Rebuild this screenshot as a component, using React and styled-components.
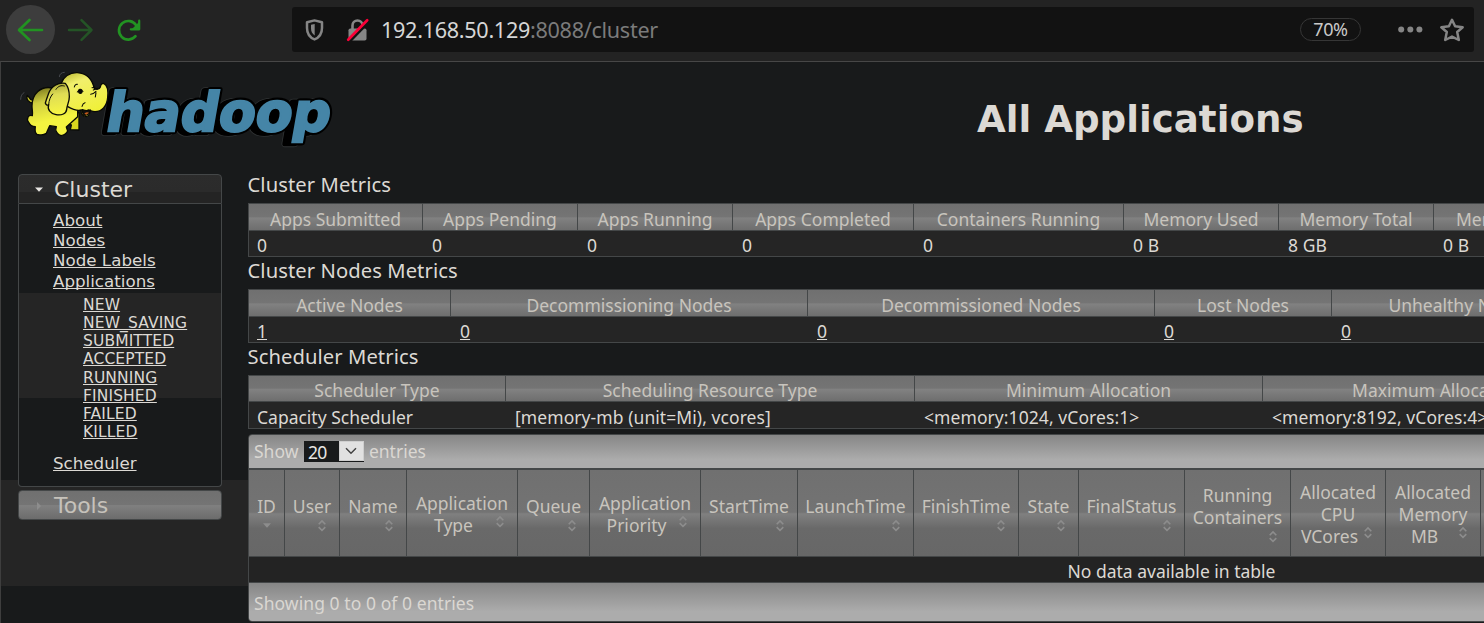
import React from 'react';
import styled, { createGlobalStyle, css } from 'styled-components';

const ui = '"Noto Sans", "Open Sans", sans-serif';
const wide = '"DejaVu Sans", sans-serif';
const line = '#444748';
const text = '#dcd9d4';

const GlobalStyle = createGlobalStyle`
  *, *::before, *::after { box-sizing: border-box; }
  body { margin: 0; background: #181a1b; color: ${text}; font-family: ${ui}; overflow: hidden; }
  svg { display: block; flex: none; overflow: visible; }
`;

const Window = styled.div`
  width: 1484px;
  height: 623px;
  overflow: hidden;
  display: flex;
  flex-direction: column;
`;

/* browser bar */
const BrowserBar = styled.header`
  flex: none;
  display: flex;
  align-items: center;
  height: 61px;
  padding: 0 10px 2px 6px;
  background: #232323;
`;
const NavButton = styled.span`
  width: 49px;
  height: 49px;
  flex: none;
  display: grid;
  place-items: center;
  border-radius: 50%;
  color: ${(p) => (p.$dim ? '#245426' : '#229322')};
  ${(p) => p.$filled && css`background: #3d3d3d;`}
`;
const AddressBar = styled.div`
  flex: 1;
  display: flex;
  align-items: center;
  height: 45px;
  margin-left: 139px;
  padding: 0 9px 0 12.5px;
  border-radius: 3px;
  background: #121212;
  color: #858585;
`;
const SecurityIcons = styled.span`
  display: flex;
  align-items: center;
  gap: 22px;
`;
const Address = styled.span`
  margin-left: 12.5px;
  flex: 1;
  font-size: 21.6px;
  line-height: 45px;
  letter-spacing: -0.3px;
  color: #7b7b7b;
  b { font-weight: 400; color: #d6d6d6; }
`;
const ZoomPill = styled.span`
  width: 61px;
  height: 23px;
  margin-right: 37px;
  border: 1px solid #363636;
  border-radius: 12px;
  font-size: 18px;
  line-height: 21px;
  letter-spacing: -0.4px;
  text-align: center;
  color: #c9c9c9;
`;

/* page */
const Page = styled.div`
  flex: 1;
  min-height: 0;
  display: flex;
  flex-direction: column;
  border-top: 1px solid #474747;
  border-left: 1px solid #3e3e3e;
  background: #181a1b;
  overflow: hidden;
`;
const Banner = styled.div`
  flex: none;
  display: flex;
  align-items: flex-start;
  height: 109px;
  padding: 2px 0 0 17px;
`;
const PageTitle = styled.h1`
  margin: 33px 0 0 639px;
  font: 700 37.2px/44px ${wide};
  white-space: nowrap;
  color: ${text};
`;
const Body = styled.div`
  flex: 1;
  display: flex;
  min-height: 0;
`;
const Sidebar = styled.nav`
  width: 247px;
  flex: none;
  padding: 3px 0 0 17px;
  font-family: ${wide};
  background: linear-gradient(#181a1b 309px, #252525 309px, #252525 415px, #181a1b 415px);
`;
const MenuTitle = styled.div`
  display: flex;
  align-items: center;
  width: 204px;
  height: 30px;
  padding: 1px 0 0 15px;
  border: 1px solid ${line};
  font-size: 22px;
  line-height: 28px;
  color: ${(p) => (p.$open ? text : '#c6c2bb')};
  border-radius: ${(p) => (p.$open ? '4px 4px 0 0' : '4px')};
  background: ${(p) => (p.$open
    ? 'linear-gradient(#2c2c2c, #2b2b2b 60%, #242424 62%, #242424)'
    : 'linear-gradient(#707070, #747474 49%, #808080 52%, #6c6c6c)')};
  svg { margin-right: 10px; }
`;
const MenuBody = styled.div`
  width: 204px;
  height: 283px;
  margin-bottom: 3px;
  padding: 6px 0 0 34px;
  border: 1px solid ${line};
  border-top: 0;
  border-radius: 0 0 4px 4px;
  background: linear-gradient(#181a1b 89px, #252525 89px, #252525 194px, #181a1b 194px);
`;
const MenuList = styled.ul`
  list-style: none;
  margin: 0;
  padding: ${(p) => (p.$nested ? '5px 0 12px 30px' : 0)};
  font-size: ${(p) => (p.$nested ? '15.5px' : '16.7px')};
  line-height: ${(p) => (p.$nested ? '18.2px' : '20.2px')};
  letter-spacing: ${(p) => (p.$nested ? '0.12px' : 0)};
`;
const Link = styled.a`
  color: ${text};
  text-decoration: underline;
  text-decoration-thickness: 1px;
  text-underline-offset: 1px;
  text-decoration-skip-ink: none;
`;

const Content = styled.main`
  flex: 1;
  min-width: 0;
  overflow: hidden;
  white-space: nowrap;
`;
const SectionTitle = styled.h3`
  margin: 0 0 0 -0.5px;
  height: 32px;
  font-weight: 400;
  font-size: 20.2px;
  line-height: 26px;
  letter-spacing: 0.08px;
`;
const Metrics = styled.div`
  display: grid;
  grid-template-columns: ${(p) => p.$columns};
  grid-template-rows: ${(p) => p.$rows};
  width: max-content;
  border: 1px solid ${line};
  border-right: 0;
  font-size: 17.5px;
  line-height: 22px;
`;
const MetricHead = styled.div`
  padding-top: ${(p) => p.$top}px;
  border-right: 1px solid ${line};
  border-bottom: 1px solid ${line};
  text-align: center;
  color: #c8c4bd;
  background: linear-gradient(#707070, #747474 48%, #818181 54%, #6e6e6e);
`;
const MetricValue = styled.div`
  padding: ${(p) => p.$top}px 0 0 9px;
  letter-spacing: 0.07px;
  background: #252525;
  &:nth-child(${(p) => p.$first}) { padding-left: 8px; letter-spacing: 0; }
`;

const DataTable = styled.section`
  width: 1847px;
  margin-top: 5px;
  border: 1px solid ${line};
  border-radius: 4px;
  overflow: hidden;
  font-size: 17.5px;
`;
const TableBar = styled.div`
  display: flex;
  align-items: center;
  height: ${(p) => (p.$footer ? 38 : 33)}px;
  padding: ${(p) => (p.$footer ? '2px 0 0 5px' : '0 0 1px 5px')};
  letter-spacing: ${(p) => (p.$footer ? '0.07px' : 0)};
  color: #dad7d2;
  background: linear-gradient(#868686, #acacac 75%, #acacac);
`;
const SelectBox = styled.span`
  display: flex;
  width: 60px;
  height: 21px;
  margin: 1px 5px 0 5.5px;
  background: #181a1b;
  color: #e8e6e3;
  line-height: 22px;
  letter-spacing: -0.8px;
  padding-left: 4px;
`;
const SelectArrow = styled.span`
  width: 25px;
  height: 20px;
  margin-left: auto;
  display: grid;
  place-items: center;
  background: #e1e1e1;
  border: 1px solid #cfcfcf;
`;
const ColumnRow = styled.div`
  display: grid;
  grid-template-columns: 36px 55px 67px 111px 72px 111px 97px 116px 105px 60px 106px 106px 95px 95px 1fr;
  height: 89px;
  border-top: 2px solid ${line};
  border-bottom: 1px solid ${line};
`;
const Column = styled.div`
  display: flex;
  flex-direction: column;
  justify-content: center;
  align-items: center;
  padding: 2px 8px 0;
  border-right: 1px solid ${line};
  line-height: 22px;
  color: #c8c4bd;
  background: linear-gradient(#707070, #737373 49%, #808080 51%, #696969 68%, #676767);
`;
const LastLine = styled.div`
  display: flex;
  align-self: stretch;
  span { flex: 1; text-align: center; }
  svg { margin-right: 1px; }
`;
const SortBelow = styled.div`
  align-self: ${(p) => (p.$center ? 'center' : 'flex-end')};
  margin: 1px ${(p) => (p.$center ? 0 : 1)}px -1px 0;
`;
const EmptyRow = styled.div`
  height: 26px;
  padding-top: 2px;
  line-height: 24px;
  border-bottom: 1px solid ${line};
  text-align: center;
  background: #232323;
`;

const BackIcon = () => (
  <svg width="27" height="24" viewBox="0 0 27 24" fill="none" stroke="currentColor" strokeWidth="2.7" strokeLinecap="round" strokeLinejoin="round">
    <path d="M12.5 2 2 12 12.5 22M2.5 12h22.5" />
  </svg>
);
const ForwardIcon = () => (
  <svg width="26" height="24" viewBox="0 0 26 24" fill="none" stroke="currentColor" strokeWidth="2.5" strokeLinecap="round" strokeLinejoin="round">
    <path d="M14.5 2.2 24.5 12l-10 9.8M24 12H2" />
  </svg>
);
const ReloadIcon = () => (
  <svg width="24" height="24" viewBox="0 0 24 24" fill="none" stroke="currentColor">
    <path d="M18.5 18.2A9.3 9.3 0 1 1 19.2 7.4" strokeWidth="2.7" strokeLinecap="round" />
    <path d="M22.2 2.7v8.6h-8.4" strokeWidth="2.2" strokeLinecap="round" strokeLinejoin="round" />
    <path d="M22 4v7h-7z" fill="currentColor" stroke="none" />
  </svg>
);
const ShieldIcon = () => (
  <svg width="19" height="22" viewBox="0 0 19 22">
    <path d="M9.5 1.4 17 3.2V9c0 5.6-2.8 9.5-7.5 11.4C4.8 18.5 2 14.6 2 9V3.2z" fill="none" stroke="currentColor" strokeWidth="2.5" strokeLinejoin="round" />
    <path d="M9.7 5v11.5C7.2 14.8 6 12.5 6 9V5.8z" fill="currentColor" />
  </svg>
);
const LockIcon = () => (
  <svg width="23" height="24" viewBox="0 0 23 24">
    <path d="M6.5 12V7.5a5 5 0 0 1 10 0V12" fill="none" stroke="currentColor" strokeWidth="2.6" />
    <rect x="2.5" y="10.5" width="18" height="12" rx="1.8" fill="currentColor" />
    <path d="M3.5 23.5 22.5 4" stroke="#121212" strokeWidth="3" />
    <path d="M2.2 21.8 21.2 2.3" stroke="#fb0038" strokeWidth="2.7" strokeLinecap="round" />
  </svg>
);
const DotsIcon = () => (
  <svg width="25" height="7" viewBox="0 0 25 7" fill="currentColor">
    <circle cx="3.2" cy="3.5" r="3" /><circle cx="12.3" cy="3.5" r="3" /><circle cx="21.4" cy="3.5" r="3" />
  </svg>
);
const Star = styled.svg`
  margin-left: 16px;
`;
const StarIcon = () => (
  <Star width="26" height="26" viewBox="0 0 26 26" fill="none" stroke="currentColor" strokeWidth="2.5" strokeLinejoin="round">
    <path d="M13 2.8 16.1 9.3 23.7 10.2 18.2 15 19.8 23 13 19.6 6.2 23 7.8 15 2.3 10.2 9.9 9.3z" />
  </Star>
);
const SortIcon = () => (
  <svg width="16" height="16" viewBox="0 0 16 16" fill="none" stroke="#8d8d8d" strokeWidth="1.6">
    <path d="M4.7 6.2 8 2.9l3.3 3.3M4.7 9.1 8 12.4l3.3-3.3" />
  </svg>
);
const SortDownIcon = () => (
  <svg width="16" height="16" viewBox="0 0 16 16" fill="#8d8d8d"><path d="M4 5.2h8L8 9.700z" /></svg>
);
const TriangleIcon = ({ open }) => (
  <svg width="10" height="10" viewBox="0 0 10 10" fill={open ? '#e8e6e3' : '#8d8d8d'}>
    <path d={open ? 'M1 2.500h8L5 6.800z' : 'M3 1v8l4-4z'} />
  </svg>
);
const ChevronIcon = () => (
  <svg width="12" height="8" viewBox="0 0 12 8" fill="none" stroke="#444" strokeWidth="1.5"><path d="M1 1.2 6 6.2 11 1.2" /></svg>
);

const Logo = () => (
  <svg width="320" height="88" viewBox="54 192 960 264">
    <defs>
      <linearGradient id="hide" x1="0" y1="0" x2="0.25" y2="1">
        <stop offset="0" stopColor="#6b6918" />
        <stop offset="0.35" stopColor="#cfcd40" />
        <stop offset="0.75" stopColor="#f4f440" />
      </linearGradient>
      <linearGradient id="ear" x1="0" y1="0" x2="0.1" y2="1">
        <stop offset="0" stopColor="#a5a333" />
        <stop offset="0.4" stopColor="#dedc55" />
        <stop offset="1" stopColor="#f6f544" />
      </linearGradient>
      <linearGradient id="head" x1="0" y1="0" x2="0.4" y2="1">
        <stop offset="0" stopColor="#b5b32c" />
        <stop offset="0.3" stopColor="#f1ef6c" />
        <stop offset="1" stopColor="#f0f038" />
      </linearGradient>
    </defs>
    <g fontFamily={wide} fontWeight="700" fontSize="161" strokeLinejoin="round">
      <g transform="translate(318 391) skewX(-10)">
        <text x="-16" y="4" textLength="660" lengthAdjust="spacingAndGlyphs" fill="#303334" stroke="#303334" strokeWidth="24">hadoop</text>
        <text x="-16" y="4" textLength="660" lengthAdjust="spacingAndGlyphs" fill="#000" stroke="#000" strokeWidth="19">hadoop</text>
        <text x="-6" y="1" textLength="673" lengthAdjust="spacingAndGlyphs" fill="#000" stroke="#000" strokeWidth="20">hadoop</text>
        <text x="-6" y="1" textLength="673" lengthAdjust="spacingAndGlyphs" fill="#4585a7" stroke="#4585a7" strokeWidth="7" strokeLinejoin="miter">hadoop</text>
      </g>
    </g>
    <g stroke="#090a05" strokeWidth="4" strokeLinejoin="round" strokeLinecap="round">
      <path d="M62 298c0-10 4-17 10-20M178 230c0-8 7-13 15-13" fill="none" stroke="#45484d" strokeWidth="3" />
      <path d="M101 309C86 309 77 297 82 286c5 0 2 12 19 16" fill="#c9c72e" />
      <path d="M204 340 202 372l12 3-3 14 26 1V338z" fill="#d8d51e" />
      <path d="M158 264C122 256 96 282 96 318c0 12 3 20 1 29-12-4-19 10-11 20 4 9 12 13 20 13-2 12 0 20 5 23 12 3 21 2 28-3l10-23 20 3c-6 12 5 25 14 27 10-2 17-7 20-14l-4-12 34-31V280z" fill="url(#hide)" />
      <path d="M183 251c7-20 25-34 49-33 29 2 45 21 51 48 9 3 16 1 18-5 1-7 5-11 10-11 12 6 14 25 12 43-2 26-18 42-38 42-9 0-15-4-21-5 8 5 5 18-5 20-14-1-17-12-15-20-14 4-30-4-42-11z" fill="url(#head)" />
      <path d="M196 250c-22-3-42 8-50 30-4 11-7 19-10 29 1 5 6 8 10 5-5 14 6 28 22 30 17 3 31-3 32-16 1-13 8-23 8-38 0-15-3-30-12-40z" fill="url(#ear)" />
      <path d="M146 314c1-14 5-24 12-32M168 268c6-10 16-13 25-10" fill="none" strokeWidth="3" />
      <path d="M247 329c10 4 17 4 24 1-1 9-8 15-16 16-6-3-8-9-8-17z" fill="#111" />
      <path d="M253 341q7-7 14-3l-8 6z" fill="#c75d1b" stroke="none" />
      <path d="M232 276l7-8 10 6M223 261c1-6 5-9 9-8M276 263l9-1M280 270l12-5M272 283c7-1 11-4 16-9M288 278l-2 13M246 319c2-7 5-10 9-11" fill="none" strokeWidth="3.200" />
      <ellipse cx="241" cy="274" rx="5" ry="6" fill="#080808" />
    </g>
  </svg>
);

const pages = ['About', 'Nodes', 'Node Labels', 'Applications'];
const states = ['NEW', 'NEW_SAVING', 'SUBMITTED', 'ACCEPTED', 'RUNNING', 'FINISHED', 'FAILED', 'KILLED'];

const metricTables = [
  {
    title: 'Cluster Metrics',
    columns: '174px 155px 155px 181px 210px 155px 155px 194px',
    rows: '27px 25px',
    heads: ['Apps Submitted', 'Apps Pending', 'Apps Running', 'Apps Completed', 'Containers Running', 'Memory Used', 'Memory Total', 'Memory Reserved'],
    values: ['0', '0', '0', '0', '0', '0 B', '8 GB', '0 B'],
  },
  {
    title: 'Cluster Nodes Metrics',
    columns: '202px 357px 347px 177px 256px',
    rows: '27px 25px',
    linked: true,
    heads: ['Active Nodes', 'Decommissioning Nodes', 'Decommissioned Nodes', 'Lost Nodes', 'Unhealthy Nodes'],
    values: ['1', '0', '0', '0', '0'],
  },
  {
    title: 'Scheduler Metrics',
    columns: '257px 409px 348px 348px',
    rows: '26px 26px',
    headTop: 3,
    valueTop: 4,
    heads: ['Scheduler Type', 'Scheduling Resource Type', 'Minimum Allocation', 'Maximum Allocation'],
    values: ['Capacity Scheduler', '[memory-mb (unit=Mi), vcores]', '<memory:1024, vCores:1>', '<memory:8192, vCores:4>'],
  },
];

const columns = [
  { lines: ['ID'], sorted: true },
  { lines: ['User'] },
  { lines: ['Name'] },
  { lines: ['Application', 'Type'], inline: true },
  { lines: ['Queue'] },
  { lines: ['Application', 'Priority'], inline: true },
  { lines: ['StartTime'] },
  { lines: ['LaunchTime'] },
  { lines: ['FinishTime'] },
  { lines: ['State'] },
  { lines: ['FinalStatus'] },
  { lines: ['Running', 'Containers'] },
  { lines: ['Allocated', 'CPU', 'VCores'], inline: true },
  { lines: ['Allocated', 'Memory', 'MB'], inline: true },
  { lines: [], blank: true },
];

function ColumnHead({ lines, inline, sorted, blank }) {
  if (blank) return <Column />;
  const plain = inline ? lines.slice(0, -1) : lines;
  return (
    <Column>
      {plain.map((l) => <div key={l}>{l}</div>)}
      {inline
        ? <LastLine><span>{lines[lines.length - 1]}</span><SortIcon /></LastLine>
        : <SortBelow $center={sorted}>{sorted ? <SortDownIcon /> : <SortIcon />}</SortBelow>}
    </Column>
  );
}

export default function App() {
  return (
    <Window>
      <GlobalStyle />
      <BrowserBar>
        <NavButton $filled><BackIcon /></NavButton>
        <NavButton $dim><ForwardIcon /></NavButton>
        <NavButton><ReloadIcon /></NavButton>
        <AddressBar>
          <SecurityIcons><ShieldIcon /><LockIcon /></SecurityIcons>
          <Address><b>192.168.50.129</b>:8088/cluster</Address>
          <ZoomPill>70%</ZoomPill>
          <DotsIcon />
          <StarIcon />
        </AddressBar>
      </BrowserBar>
      <Page>
        <Banner>
          <Logo />
          <PageTitle>All Applications</PageTitle>
        </Banner>
        <Body>
          <Sidebar>
            <MenuTitle $open><TriangleIcon open />Cluster</MenuTitle>
            <MenuBody>
              <MenuList>
                {pages.map((p) => <li key={p}><Link>{p}</Link></li>)}
              </MenuList>
              <MenuList $nested>
                {states.map((s) => <li key={s}><Link>{s}</Link></li>)}
              </MenuList>
              <MenuList><li><Link>Scheduler</Link></li></MenuList>
            </MenuBody>
            <MenuTitle><TriangleIcon />Tools</MenuTitle>
          </Sidebar>
          <Content>
            {metricTables.map((t) => (
              <React.Fragment key={t.title}>
                <SectionTitle>{t.title}</SectionTitle>
                <Metrics $columns={t.columns} $rows={t.rows}>
                  {t.heads.map((h) => <MetricHead key={h} $top={t.headTop ?? 4}>{h}</MetricHead>)}
                  {t.values.map((v, i) => (
                    <MetricValue key={i} $top={t.valueTop ?? 3} $first={t.heads.length + 1}>
                      {t.linked ? <Link>{v}</Link> : v}
                    </MetricValue>
                  ))}
                </Metrics>
              </React.Fragment>
            ))}
            <DataTable>
              <TableBar>
                Show
                <SelectBox>20<SelectArrow><ChevronIcon /></SelectArrow></SelectBox>
                entries
              </TableBar>
              <ColumnRow>
                {columns.map((c, i) => <ColumnHead key={i} {...c} />)}
              </ColumnRow>
              <EmptyRow>No data available in table</EmptyRow>
              <TableBar $footer>Showing 0 to 0 of 0 entries</TableBar>
            </DataTable>
          </Content>
        </Body>
      </Page>
    </Window>
  );
}
